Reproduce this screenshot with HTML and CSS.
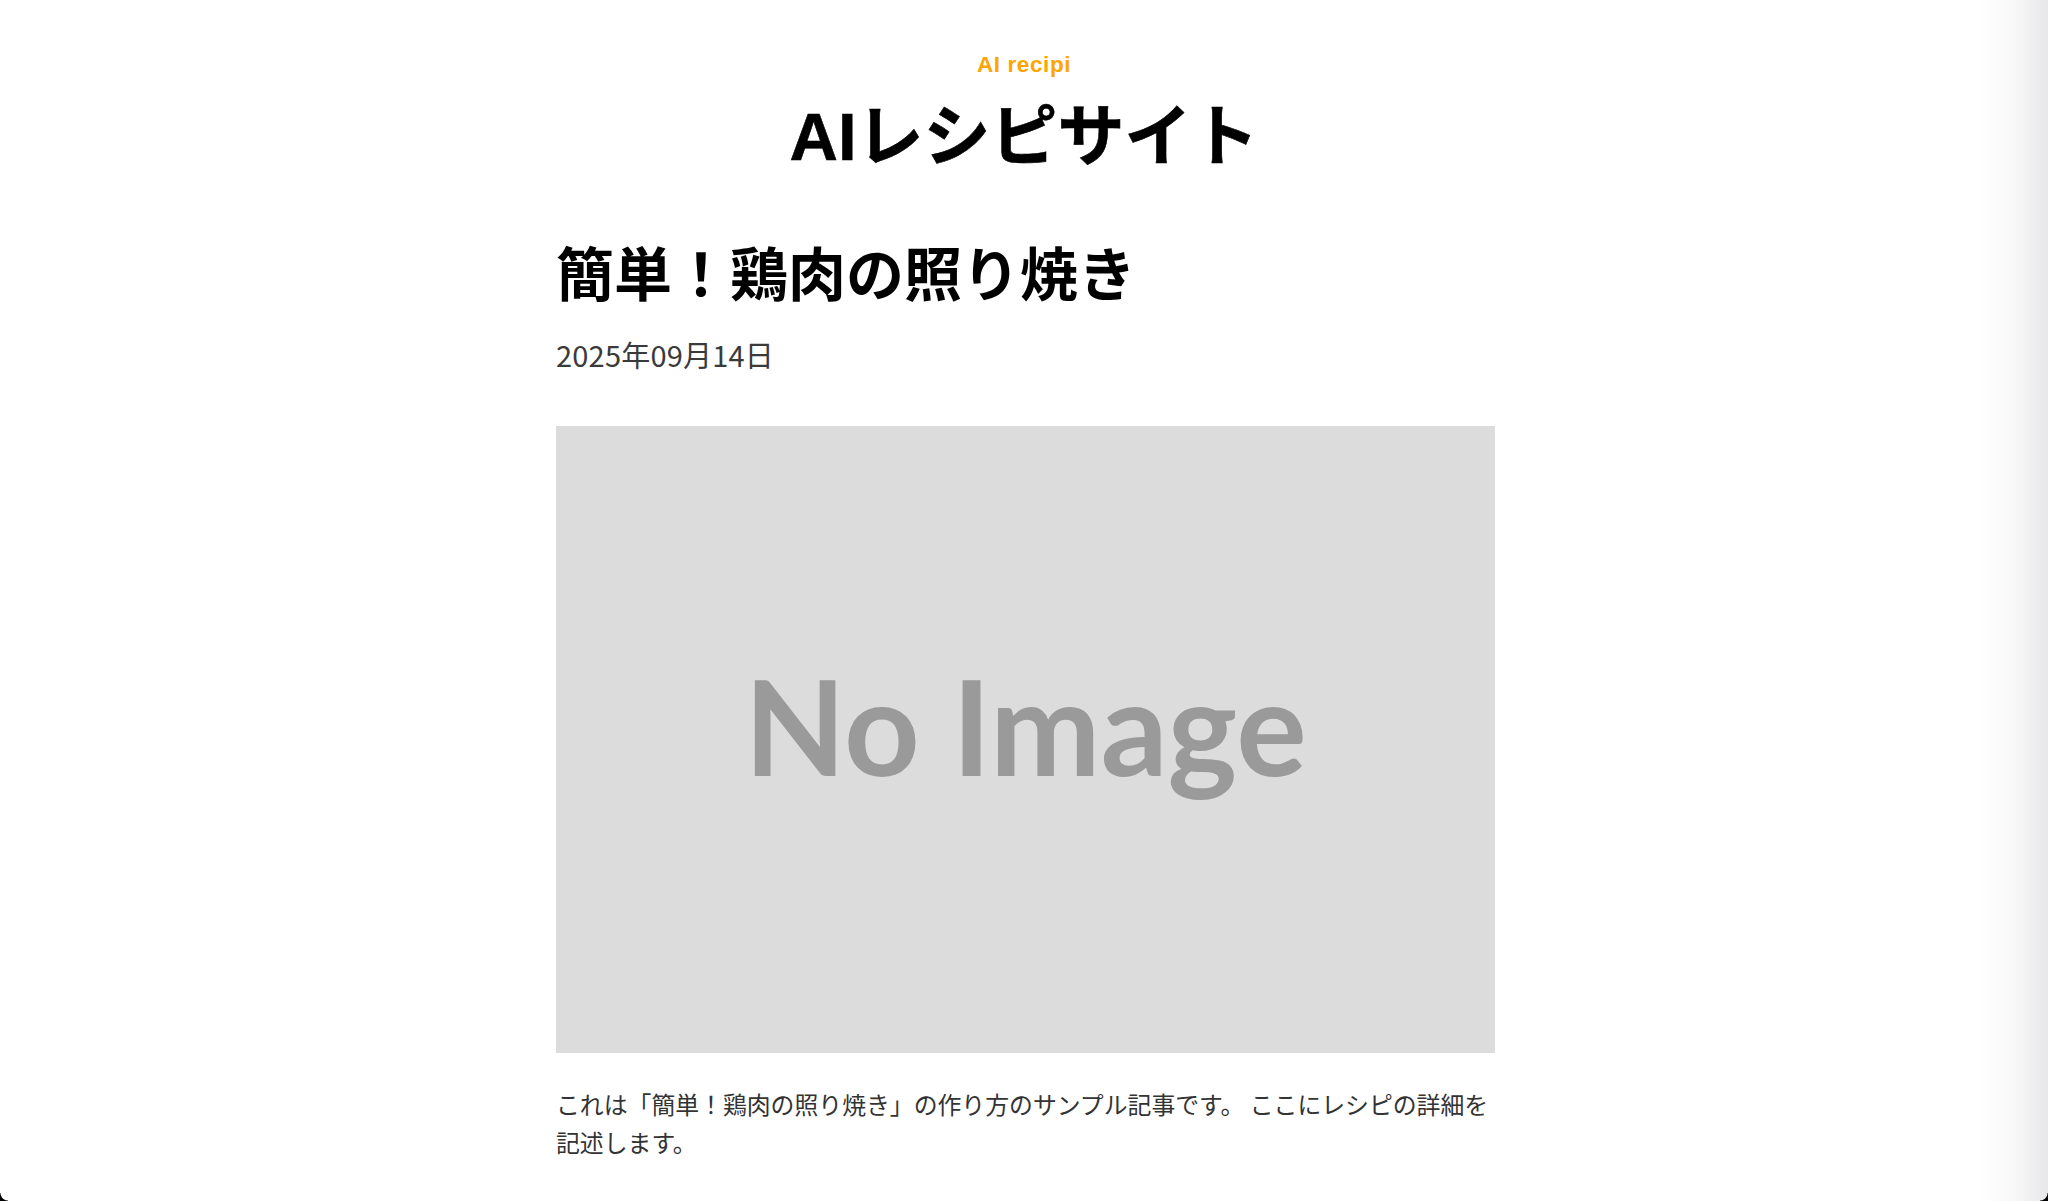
FILE: index.html
```html
<!DOCTYPE html>
<html lang="ja">
<head>
<meta charset="utf-8">
<title>AIレシピサイト</title>
<link rel="stylesheet" href="styles.css">
</head>
<body>
<header class="site-header">
  <p class="site-sub">AI recipi</p>
  <h1 class="site-title">AIレシピサイト</h1>
</header>
<main class="article">
  <h2 class="post-title">簡単！鶏肉の照り焼き</h2>
  <p class="post-date">2025年09月14日</p>
  <div class="thumb"><span class="thumb-text">No Image</span></div>
  <p class="post-body">これは「簡単！鶏肉の照り焼き」の作り方のサンプル記事です。 ここにレシピの詳細を記述します。</p>
</main>
<div class="edge-shadow"></div>
<div class="corner corner-left"></div>
<div class="corner corner-right"></div>
</body>
</html>
```

FILE: styles.css
```css
html, body {
  margin: 0;
  padding: 0;
  background: #ffffff;
}
body {
  font-family: "Noto Sans CJK JP", "Noto Sans", sans-serif;
  color: #000;
  overflow: hidden;
  height: 1201px;
}
.site-header {
  padding-top: 50px;
  text-align: center;
}
.site-sub {
  margin: 0;
  font-family: "Liberation Sans", "Noto Sans CJK JP", sans-serif;
  font-weight: 700;
  font-size: 22.5px;
  line-height: 29px;
  letter-spacing: 0.6px;
  color: #ffa500;
}
.site-title {
  margin: 18px 0 0;
  font-family: "Liberation Sans", "Noto Sans CJK JP", sans-serif;
  font-weight: 700;
  font-size: 67px;
  line-height: 80px;
  color: #000;
  -webkit-text-stroke: 0.6px #000;
}
.article {
  width: 939px;
  margin: 54px 0 0 calc(50% - 468px);
}
.post-title {
  margin: 0;
  font-weight: 700;
  font-size: 58px;
  line-height: 80px;
  color: #000;
}
.post-date {
  margin: 23px 0 0;
  font-size: 29px;
  line-height: 40px;
  letter-spacing: 0.2px;
  color: #3a3a3a;
}
.thumb {
  margin-top: 52px;
  height: 627px;
  background: #dcdcdd;
  display: flex;
  align-items: center;
  justify-content: center;
  padding-bottom: 30px;
  box-sizing: border-box;
}
.thumb-text {
  font-family: "Lato", "Liberation Sans", sans-serif;
  font-weight: 700;
  font-size: 132px;
  line-height: 1;
  color: #9a9a9a;
}
.post-body {
  margin: 32px 0 0;
  font-size: 23.85px;
  line-height: 38px;
  color: #333333;
}
.edge-shadow {
  position: fixed;
  top: 0;
  right: 0;
  width: 70px;
  height: 100%;
  background: linear-gradient(to right, rgba(40, 40, 60, 0), rgba(40, 40, 60, 0.03) 50%, rgba(40, 40, 60, 0.11));
  pointer-events: none;
}
.corner {
  position: fixed;
  bottom: 0;
  width: 8px;
  height: 8px;
}
.corner-left {
  left: 0;
  background: radial-gradient(circle at 100% 0, rgba(0,0,0,0) 7px, #000 8px);
}
.corner-right {
  right: 0;
  background: radial-gradient(circle at 0 0, rgba(0,0,0,0) 7px, #000 8px);
}
```
